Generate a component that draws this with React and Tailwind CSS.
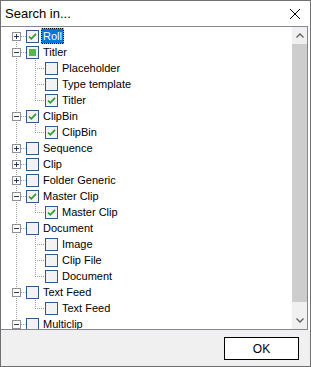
import React from "react";

const tree = [
  { label: "Roll", state: "checked", exp: "plus", sel: true },
  {
    label: "Titler",
    state: "mixed",
    exp: "minus",
    children: [
      { label: "Placeholder" },
      { label: "Type template" },
      { label: "Titler", state: "checked" },
    ],
  },
  { label: "ClipBin", state: "checked", exp: "minus", children: [{ label: "ClipBin", state: "checked" }] },
  { label: "Sequence", exp: "plus" },
  { label: "Clip", exp: "plus" },
  { label: "Folder Generic", exp: "plus" },
  { label: "Master Clip", state: "checked", exp: "minus", children: [{ label: "Master Clip", state: "checked" }] },
  {
    label: "Document",
    exp: "minus",
    children: [{ label: "Image" }, { label: "Clip File" }, { label: "Document" }],
  },
  { label: "Text Feed", exp: "minus", children: [{ label: "Text Feed" }] },
  { label: "Multiclip", exp: "minus" },
];

const DOT = "#a0a0a0";

function Gutter({ level, exp, first, last }) {
  const w = level === 0 ? 25 : 44;
  return (
    <svg width={w} height="16" className="shrink-0 block" shapeRendering="crispEdges">
      <line x1="15.5" y1={first ? 8 : 0} x2="15.5" y2="16" stroke={DOT} strokeDasharray="1 1" />
      {level === 0 && (
        <g>
          <line x1="20" y1="8.5" x2="25" y2="8.5" stroke={DOT} strokeDasharray="1 1" />
          <rect x="11.5" y="4.5" width="8" height="8" fill="#ffffff" stroke="#919191" />
          <line x1="13" y1="8.5" x2="18" y2="8.5" stroke="#1f3b6b" />
          {exp === "plus" && <line x1="15.5" y1="6" x2="15.5" y2="11" stroke="#1f3b6b" />}
        </g>
      )}
      {level === 1 && (
        <g>
          <line x1="34.5" y1="0" x2="34.5" y2={last ? 9 : 16} stroke={DOT} strokeDasharray="1 1" />
          <line x1="36" y1="8.5" x2="44" y2="8.5" stroke={DOT} strokeDasharray="1 1" />
        </g>
      )}
    </svg>
  );
}

function Check({ state }) {
  return (
    <span className="w-[13px] h-[13px] shrink-0 border border-[#33598a] bg-[#f2f2f2] flex items-center justify-center">
      {state === "checked" && (
        <svg width="11" height="11" viewBox="0 0 11 11" className="block">
          <path d="M2 5.5 L4.3 7.8 L9 2.8" stroke="#27a127" strokeWidth="1.7" fill="none" />
        </svg>
      )}
      {state === "mixed" && <span className="w-[7px] h-[7px] bg-[#4cbd4c]" />}
    </span>
  );
}

function Row({ level, item, first, last }) {
  return (
    <div className="flex items-center h-4 shrink-0">
      <Gutter level={level} exp={item.exp} first={first} last={last} />
      <Check state={item.state} />
      {item.sel ? (
        <span className="ml-[2px] bg-black flex">
          <span className="h-4 leading-[14px] px-[1px] border border-dotted border-[#ff9a1e] bg-[#0078d7] bg-clip-padding text-white whitespace-nowrap">
            {item.label}
          </span>
        </span>
      ) : (
        <span className="ml-[2px] h-4 leading-4 px-[2px] text-black whitespace-nowrap">{item.label}</span>
      )}
    </div>
  );
}

export default function App() {
  const rows = [];
  tree.forEach((n, i) => {
    rows.push(<Row key={`r${i}`} level={0} item={n} first={i === 0} />);
    if (n.children) {
      n.children.forEach((c, j) => {
        rows.push(
          <Row key={`r${i}-${j}`} level={1} item={c} last={j === n.children.length - 1} />
        );
      });
    }
  });

  return (
    <div className="w-[311px] h-[367px] border border-[#707070] bg-white flex flex-col font-['Liberation_Sans',Arial,sans-serif] overflow-hidden">
      <div className="h-[25px] shrink-0 flex items-center justify-between pl-[4px] pr-[10px] bg-white">
        <span className="text-[13px] text-black">Search in...</span>
        <svg width="10" height="10" viewBox="0 0 10 10" className="block">
          <path d="M0 0 L10 10 M10 0 L0 10" stroke="#000" strokeWidth="1" />
        </svg>
      </div>
      <div className="flex-1 min-h-0 flex bg-white">
        <div className="flex-1 min-w-0 mr-[2px] border-t border-r border-b border-[#828790] flex">
          <div className="flex-1 min-w-0 overflow-hidden pt-[1px] flex flex-col text-[11px]">{rows}</div>
          <div className="w-[15px] shrink-0 bg-[#f0f0f0] flex flex-col">
            <div className="h-[17px] flex items-center justify-center">
              <svg width="8" height="5" viewBox="0 0 8 5" className="block">
                <path d="M0.5 4.5 L4 1 L7.5 4.5" stroke="#606060" strokeWidth="1.4" fill="none" />
              </svg>
            </div>
            <div className="flex-1 flex flex-col">
              <div className="h-[258px] bg-[#cdcdcd]" />
            </div>
            <div className="h-[17px] flex items-center justify-center">
              <svg width="8" height="5" viewBox="0 0 8 5" className="block">
                <path d="M0.5 0.5 L4 4 L7.5 0.5" stroke="#606060" strokeWidth="1.4" fill="none" />
              </svg>
            </div>
          </div>
        </div>
      </div>
      <div className="h-[36px] shrink-0 bg-[#f0f0f0] flex justify-end items-start pt-[7px] pr-[11px]">
        <button className="w-[75px] h-[23px] border border-black bg-white text-[12px] text-black flex items-center justify-center">
          OK
        </button>
      </div>
    </div>
  );
}
